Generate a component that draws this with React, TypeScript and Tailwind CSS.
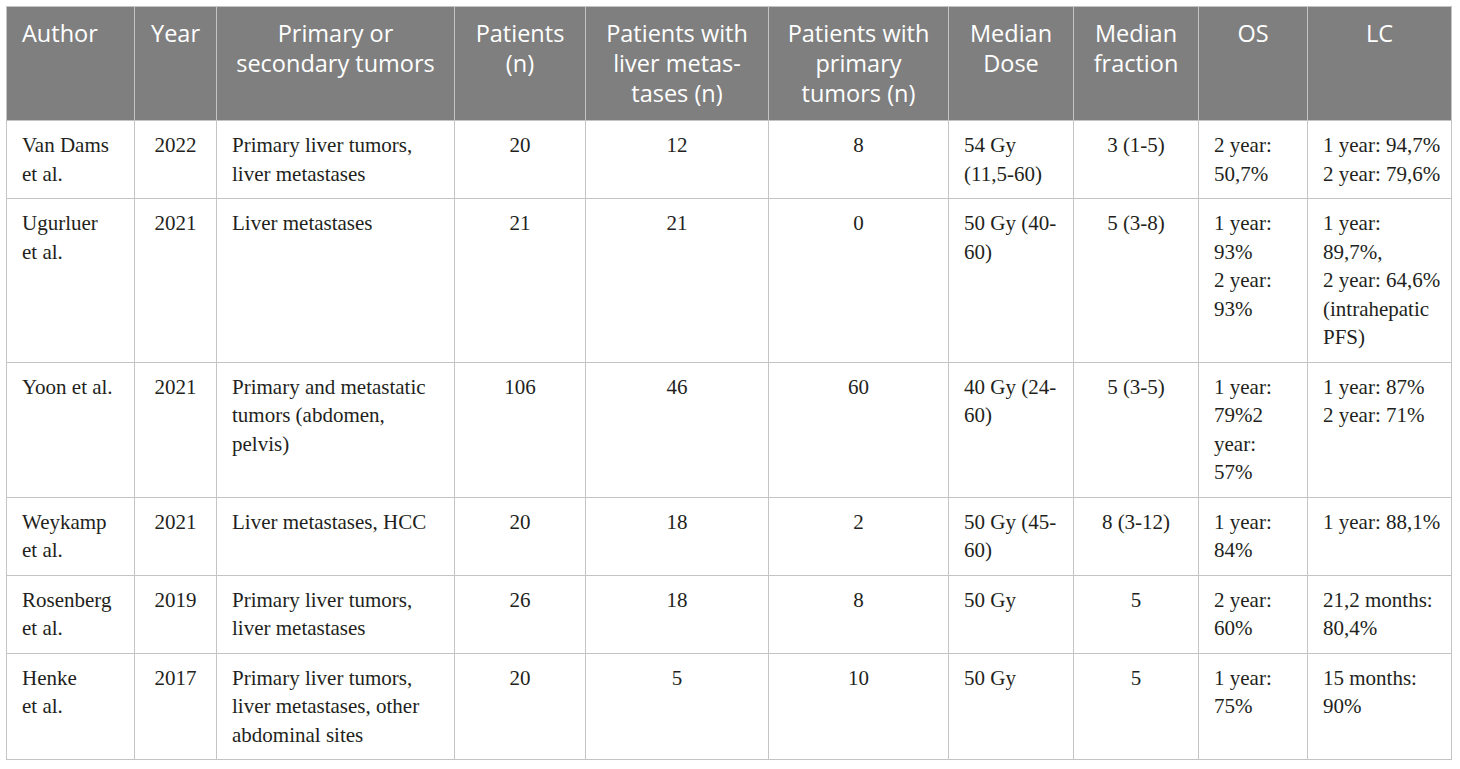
const cols = [128, 82, 238, 131, 183, 180, 125, 125, 109, 144]

type Align = 'l' | 'c'
const headAlign: Align[] = ['l', 'c', 'c', 'c', 'c', 'c', 'c', 'c', 'c', 'c']
const bodyAlign: Align[] = ['l', 'c', 'l', 'c', 'c', 'c', 'l', 'c', 'l', 'l']

const HEAD: string[][] = [
  ['Author'],
  ['Year'],
  ['Primary or', 'secondary tumors'],
  ['Patients', '(n)'],
  ['Patients with', 'liver metas-', 'tases (n)'],
  ['Patients with', 'primary', 'tumors (n)'],
  ['Median', 'Dose'],
  ['Median', 'fraction'],
  ['OS'],
  ['LC'],
]

const ROWS: string[][][] = [
  [['Van Dams', 'et al.'], ['2022'], ['Primary liver tumors,', 'liver metastases'], ['20'], ['12'], ['8'], ['54 Gy', '(11,5-60)'], ['3 (1-5)'], ['2 year:', '50,7%'], ['1 year: 94,7%', '2 year: 79,6%']],
  [['Ugurluer', 'et al.'], ['2021'], ['Liver metastases'], ['21'], ['21'], ['0'], ['50 Gy (40-', '60)'], ['5 (3-8)'], ['1 year:', '93%', '2 year:', '93%'], ['1 year:', '89,7%,', '2 year: 64,6%', '(intrahepatic', 'PFS)']],
  [['Yoon et al.'], ['2021'], ['Primary and metastatic', 'tumors (abdomen,', 'pelvis)'], ['106'], ['46'], ['60'], ['40 Gy (24-', '60)'], ['5 (3-5)'], ['1 year:', '79%2', 'year:', '57%'], ['1 year: 87%', '2 year: 71%']],
  [['Weykamp', 'et al.'], ['2021'], ['Liver metastases, HCC'], ['20'], ['18'], ['2'], ['50 Gy (45-', '60)'], ['8 (3-12)'], ['1 year:', '84%'], ['1 year: 88,1%']],
  [['Rosenberg', 'et al.'], ['2019'], ['Primary liver tumors,', 'liver metastases'], ['26'], ['18'], ['8'], ['50 Gy'], ['5'], ['2 year:', '60%'], ['21,2 months:', '80,4%']],
  [['Henke', 'et al.'], ['2017'], ['Primary liver tumors,', 'liver metastases, other', 'abdominal sites'], ['20'], ['5'], ['10'], ['50 Gy'], ['5'], ['1 year:', '75%'], ['15 months:', '90%']],
]

function Lines({ lines }: { lines: string[] }) {
  return (
    <>
      {lines.map((l, i) => (
        <div key={i} className="whitespace-nowrap">{l}</div>
      ))}
    </>
  )
}

export default function App() {
  return (
    <div className="min-h-screen bg-white pl-[6px] pt-[6px]">
      <table className="table-fixed border-collapse w-[1446px]">
        <colgroup>
          {cols.map((w, i) => (
            <col key={i} style={{ width: w }} />
          ))}
        </colgroup>
        <thead>
          <tr className="bg-[#7f7f7f] text-white font-['Open_Sans',sans-serif] text-[23.5px] leading-[30px]">
            {HEAD.map((h, i) => (
              <th
                key={i}
                className={`border border-[#c4c4c4] align-top font-normal pt-[11px] pb-[12px] px-[15px] ${headAlign[i] === 'l' ? 'text-left' : 'text-center'}`}
              >
                <Lines lines={h} />
              </th>
            ))}
          </tr>
        </thead>
        <tbody className="font-['Liberation_Serif','Times_New_Roman',serif] text-[21px] leading-[28.5px] text-[#231f20]">
          {ROWS.map((r, ri) => (
            <tr key={ri}>
              {r.map((c, ci) => (
                <td
                  key={ci}
                  className={`border border-[#c4c4c4] align-top pt-[10px] pb-[10px] px-[15px] ${bodyAlign[ci] === 'l' ? 'text-left' : 'text-center'}`}
                >
                  <Lines lines={c} />
                </td>
              ))}
            </tr>
          ))}
        </tbody>
      </table>
    </div>
  )
}
